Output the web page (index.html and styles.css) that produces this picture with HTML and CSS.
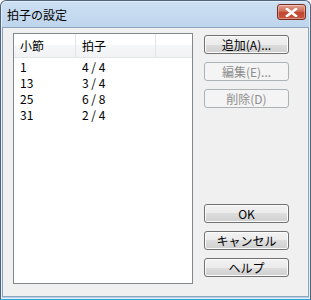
FILE: index.html
```html
<!DOCTYPE html>
<html lang="ja">
<head>
<meta charset="utf-8">
<link rel="stylesheet" href="styles.css">
</head>
<body>
<div class="window">
  <div class="titlebar">
    <span class="title">拍子の設定</span>
    <button class="close" aria-label="閉じる">
      <svg width="13" height="9" viewBox="0 0 13 9"><path d="M2 1 L11 8 M11 1 L2 8" stroke="#fff" stroke-width="2.6" stroke-linecap="square"/></svg>
    </button>
  </div>
  <div class="client">
    <div class="listview">
      <div class="lv-header">
        <div class="hcell c1">小節</div>
        <div class="hcell c2">拍子</div>
        <div class="hcell c3"></div>
      </div>
      <div class="lv-row"><span class="c1">1</span><span class="c2">4 / 4</span></div>
      <div class="lv-row"><span class="c1">13</span><span class="c2">3 / 4</span></div>
      <div class="lv-row"><span class="c1">25</span><span class="c2">6 / 8</span></div>
      <div class="lv-row"><span class="c1">31</span><span class="c2">2 / 4</span></div>
    </div>
    <div class="buttons">
      <div class="group">
        <button class="btn">追加(A)...</button>
        <button class="btn" disabled>編集(E)...</button>
        <button class="btn" disabled>削除(D)</button>
      </div>
      <div class="group">
        <button class="btn">OK</button>
        <button class="btn">キャンセル</button>
        <button class="btn">ヘルプ</button>
      </div>
    </div>
  </div>
</div>
</body>
</html>
```

FILE: styles.css
```css
* { box-sizing: border-box; }
html, body { margin: 0; padding: 0; background: #ffffff; }
body {
  font-family: "Noto Sans CJK JP", "DejaVu Sans", sans-serif;
  font-size: 12px;
  color: #000;
}
.window {
  width: 311px;
  height: 300px;
  border: 1px solid #4f6479;
  border-bottom-color: #2ea7d6;
  border-radius: 6px 6px 0 0;
  background: linear-gradient(#cde0f3, #bdd4ec 28px, #b9d1ea);
  display: flex;
  flex-direction: column;
  box-shadow: inset 0 0 0 1px #e4eefa;
}
.titlebar {
  height: 26px;
  display: flex;
  align-items: center;
  justify-content: space-between;
  padding: 0 4px 0 6px;
}
.title {
  font-size: 12px;
  line-height: 14px;
  font-weight: 400;
  color: #000;
  padding-top: 1px;
}
.close {
  width: 29px;
  height: 16px;
  margin-top: -4px;
  padding: 0;
  border: 1px solid #7a2d21;
  border-radius: 3px;
  background: linear-gradient(#e3a390, #d06a55 45%, #c04530 55%, #c9593f);
  display: flex;
  align-items: center;
  justify-content: center;
  box-shadow: inset 0 0 0 1px rgba(255,255,255,0.35);
}
.client {
  flex: 1;
  margin: 0 1px 2px 1px;
  background: #f0f0f0;
  border: 1px solid #8ea4bd;
  display: flex;
  padding: 5px 17px 12px 10px;
  gap: 11px;
}
.listview {
  width: 180px;
  border: 1px solid #828790;
  background: #fff;
}
.lv-header {
  display: flex;
  height: 24px;
  background: linear-gradient(#ffffff 50%, #f6f7f9 50%, #f1f2f4);
  border-bottom: 1px solid #e5e6e8;
}
.hcell {
  display: flex;
  align-items: center;
  border-right: 1px solid #e3e4e6;
  line-height: 14px;
}
.c1 { width: 62px; padding-left: 6px; }
.c2 { width: 80px; padding-left: 6px; }
.c3 { flex: 1; border-right: none; }
.lv-row {
  display: flex;
  height: 16px;
  line-height: 16px;
}
.lv-header + .lv-row { margin-top: 1px; }
.buttons {
  width: 85px;
  display: flex;
  flex-direction: column;
  justify-content: space-between;
  padding: 2px 0 7px;
}
.group {
  display: flex;
  flex-direction: column;
  gap: 8px;
}
.btn {
  width: 85px;
  height: 19px;
  padding: 0;
  font-family: inherit;
  font-size: 12px;
  line-height: 14px;
  color: #000;
  border: 1px solid #707070;
  border-radius: 3px;
  background: linear-gradient(#f2f2f2, #ebebeb 50%, #dddddd 50%, #cfcfcf);
  box-shadow: inset 0 0 0 1px #fcfcfc;
}
.btn:disabled {
  color: #8d8d8d;
  border-color: #adb2b5;
  background: #f4f4f4;
  box-shadow: none;
}
```
